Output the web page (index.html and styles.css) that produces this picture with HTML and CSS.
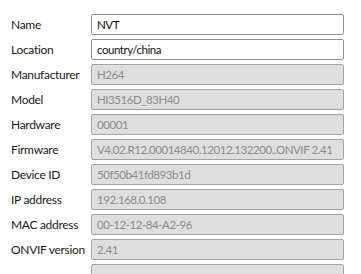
FILE: index.html
```
<!DOCTYPE html>
<html lang="en">
<head>
    <meta charset="UTF-8">
    <meta name="viewport" content="width=device-width, initial-scale=1.0">
    <title>Device Information</title>
    <link rel="stylesheet" href="styles.css">
</head>
<body>
    <div class="info-form">
        <label for="name">Name</label>
        <input type="text" id="name" value="NVT">

        <label for="location">Location</label>
        <input type="text" id="location" value="country/china">

        <label for="manufacturer">Manufacturer</label>
        <input type="text" id="manufacturer" value="H264" disabled>

        <label for="model">Model</label>
        <input type="text" id="model" value="HI3516D_83H40" disabled>

        <label for="hardware">Hardware</label>
        <input type="text" id="hardware" value="00001" disabled>

        <label for="firmware">Firmware</label>
        <input type="text" id="firmware" value="V4.02.R12.00014840.12012.132200..ONVIF 2.41" disabled>

        <label for="deviceId">Device ID</label>
        <input type="text" id="deviceId" value="50f50b41fd893b1d" disabled>

        <label for="ip">IP address</label>
        <input type="text" id="ip" value="192.168.0.108" disabled>

        <label for="mac">MAC address</label>
        <input type="text" id="mac" value="00-12-12-84-A2-96" disabled>

        <label for="onvif">ONVIF version</label>
        <input type="text" id="onvif" value="2.41" disabled>

        <label for="extra"></label>
        <input type="text" id="extra" value="" disabled>
    </div>
</body>
</html>
```

FILE: styles.css
```
* {
    margin: 0;
    padding: 0;
    box-sizing: border-box;
    font-family: 'Lato', sans-serif;
}

html, body {
    height: 100%;
    overflow: hidden;
}

body {
    background-color: white;
    padding: 14px 0 0 11px;
}

.info-form {
    display: grid;
    grid-template-columns: 80px 253px;
    row-gap: 4px;
    align-items: center;
}

label {
    font-size: 12px;
    letter-spacing: -0.3px;
    color: #1a1a1a;
    white-space: nowrap;
    min-height: 21px;
    line-height: 21px;
}

input {
    height: 21px;
    padding: 0 5px;
    border: 1px solid #8f8f8f;
    border-radius: 2px;
    font-size: 11.5px;
    letter-spacing: -0.45px;
    color: #111;
    background-color: white;
    outline: none;
}

input:disabled {
    background-color: #dedede;
    border-color: #a3a3a3;
    color: #8c8c8c;
}
```
